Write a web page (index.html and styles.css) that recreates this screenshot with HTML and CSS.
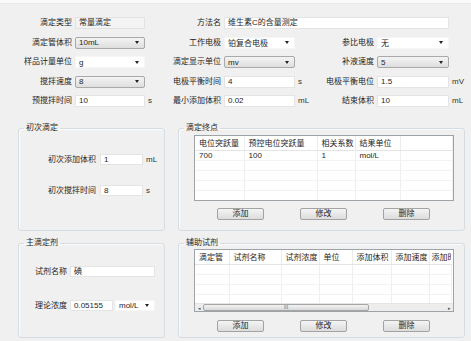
FILE: index.html
```html
<!DOCTYPE html>
<html lang="zh">
<head>
  <meta charset="UTF-8" />
  <meta name="viewport" content="width=device-width, initial-scale=1.0" />
  <title>滴定方法参数</title>
  <link rel="stylesheet" href="styles.css">
</head>
<body>
  <div class="topbar"></div>
  <div class="form">
    <div class="lbl">滴定类型</div>
    <div class="ro">常量滴定</div>
    <div></div>
    <div class="lbl">方法名</div>
    <div class="txt wide">维生素C的含量测定</div>
    <div></div>

    <div class="lbl">滴定管体积</div>
    <div class="combo btn">10mL</div>
    <div></div>
    <div class="lbl">工作电极</div>
    <div class="combo">铂复合电极</div>
    <div></div>
    <div class="lbl">参比电极</div>
    <div class="combo">无</div>
    <div></div>

    <div class="lbl">样品计量单位</div>
    <div class="combo">g</div>
    <div></div>
    <div class="lbl">滴定显示单位</div>
    <div class="combo btn">mv</div>
    <div></div>
    <div class="lbl">补液速度</div>
    <div class="combo btn">5</div>
    <div></div>

    <div class="lbl">搅拌速度</div>
    <div class="combo btn">8</div>
    <div></div>
    <div class="lbl">电极平衡时间</div>
    <div class="txt">4</div>
    <div class="unit">s</div>
    <div class="lbl">电极平衡电位</div>
    <div class="txt">1.5</div>
    <div class="unit">mV</div>

    <div class="lbl">预搅拌时间</div>
    <div class="txt">10</div>
    <div class="unit">s</div>
    <div class="lbl">最小添加体积</div>
    <div class="txt">0.02</div>
    <div class="unit">mL</div>
    <div class="lbl">结束体积</div>
    <div class="txt">10</div>
    <div class="unit">mL</div>
  </div>

  <div class="section top">
    <fieldset class="group left">
      <legend>初次滴定</legend>
      <div class="first-rows">
        <div class="lbl">初次添加体积</div>
        <div class="txt">1</div>
        <div class="unit">mL</div>
        <div class="lbl">初次搅拌时间</div>
        <div class="txt">8</div>
        <div class="unit">s</div>
      </div>
    </fieldset>
    <fieldset class="group right">
      <legend>滴定终点</legend>
      <div class="grid end-grid">
        <table>
          <colgroup>
            <col style="width:49px"><col style="width:73px"><col style="width:38px"><col style="width:45px"><col>
          </colgroup>
          <tr><th>电位突跃量</th><th>预控电位突跃量</th><th>相关系数</th><th>结果单位</th><th></th></tr>
          <tr><td>700</td><td>100</td><td>1</td><td>mol/L</td><td></td></tr>
          <tr><td></td><td></td><td></td><td></td><td></td></tr>
          <tr><td></td><td></td><td></td><td></td><td></td></tr>
          <tr><td></td><td></td><td></td><td></td><td></td></tr>
          <tr><td></td><td></td><td></td><td></td><td></td></tr>
        </table>
      </div>
      <div class="btns">
        <button>添加</button>
        <button>修改</button>
        <button>删除</button>
      </div>
    </fieldset>
  </div>

  <div class="section bottom">
    <fieldset class="group left">
      <legend>主滴定剂</legend>
      <div class="main-rows">
        <div class="lbl">试剂名称</div>
        <div class="txt name">碘</div>
        <div class="lbl">理论浓度</div>
        <div class="conc">
          <div class="txt">0.05155</div>
          <div class="combo">mol/L</div>
        </div>
      </div>
    </fieldset>
    <fieldset class="group right">
      <legend>辅助试剂</legend>
      <div class="grid aux-grid">
        <div class="aux-view">
          <table>
            <colgroup>
              <col style="width:34px"><col style="width:52px"><col style="width:38px"><col style="width:33px"><col style="width:39px"><col style="width:38px"><col style="width:22px">
            </colgroup>
            <tr><th>滴定管</th><th>试剂名称</th><th>试剂浓度</th><th>单位</th><th>添加体积</th><th>添加速度</th><th class="cut">添加时</th></tr>
            <tr><td></td><td></td><td></td><td></td><td></td><td></td><td></td></tr>
            <tr><td></td><td></td><td></td><td></td><td></td><td></td><td></td></tr>
            <tr><td></td><td></td><td></td><td></td><td></td><td></td><td></td></tr>
            <tr><td></td><td></td><td></td><td></td><td></td><td></td><td></td></tr>
          </table>
        </div>
        <div class="hscroll">
          <span class="sarrow">&#9666;</span>
          <div class="thumb">III</div>
          <span class="sarrow">&#9656;</span>
        </div>
      </div>
      <div class="btns">
        <button>添加</button>
        <button>修改</button>
        <button>删除</button>
      </div>
    </fieldset>
  </div>
</body>
</html>
```

FILE: styles.css
```css
* {
  box-sizing: border-box;
  margin: 0;
  padding: 0;
}
body {
  width: 471px;
  height: 341px;
  overflow: hidden;
  background-color: #f0f0f0;
  font-family: "Liberation Sans", "Noto Sans CJK SC", sans-serif;
  font-size: 8px;
  color: #1e1e1e;
}
.topbar {
  height: 4px;
  background-color: #fafafa;
  border-bottom: 1px solid #e8e8e8;
}
.form {
  display: grid;
  grid-template-columns: 75px 70px 12px 67px 71px 14px 68px 72px 1fr;
  grid-template-rows: repeat(5, 12px);
  row-gap: 7.5px;
  padding-top: 13px;
  height: 108px;
}
.lbl {
  text-align: right;
  padding-right: 3px;
  line-height: 12px;
  white-space: nowrap;
}
.unit {
  padding-left: 3px;
  line-height: 12px;
  color: #333;
}
.txt {
  background-color: #fff;
  border: 1px solid #e4e4e4;
  padding-left: 3px;
  line-height: 10px;
  height: 12px;
  white-space: nowrap;
}
.wide {
  grid-column: span 4;
}
.ro {
  background-color: #f3f3f3;
  border: 1px solid #e2e2e2;
  padding-left: 3px;
  line-height: 10px;
}
.combo {
  display: flex;
  align-items: center;
  justify-content: space-between;
  height: 12px;
  padding: 0 5px 0 3px;
  background-color: #fff;
  border: 1px solid #f6f6f6;
  white-space: nowrap;
}
.combo::after {
  content: "";
  border-left: 2.5px solid transparent;
  border-right: 2.5px solid transparent;
  border-top: 3px solid #222;
}
.combo.btn {
  background: linear-gradient(#f4f4f4, #dedede);
  border: 1px solid #a9a9a9;
  border-radius: 2px;
}
.section {
  display: flex;
  padding-left: 18px;
}
.section.top {
  margin-top: 11px;
  height: 108px;
}
.section.bottom {
  margin-top: 7px;
  height: 100px;
}
.group {
  border: 1px solid #d5dde3;
  border-radius: 3px;
  box-shadow: inset 1px 1px 0 #fbfbfb;
}
.group legend {
  margin-left: 5px;
  padding: 0 2px;
  line-height: 10px;
  color: #1e1e1e;
}
.group.left {
  width: 147px;
}
.group.right {
  width: 287px;
  margin-left: 13px;
}
.first-rows {
  display: grid;
  grid-template-columns: 81px 43px 1fr;
  grid-template-rows: 11px 11px;
  row-gap: 20px;
  margin-top: 21px;
}
.first-rows .lbl,
.first-rows .unit,
.main-rows .lbl {
  line-height: 11px;
}
.first-rows .lbl {
  padding-right: 4px;
}
.first-rows .txt,
.main-rows .txt {
  height: 11px;
  line-height: 9px;
}
.main-rows {
  display: grid;
  grid-template-columns: 51px 85px;
  grid-template-rows: 11px 11px;
  row-gap: 23px;
  margin-top: 18px;
}
.conc {
  display: flex;
  gap: 2px;
}
.conc .txt {
  width: 43px;
}
.conc .combo {
  flex: 1;
  height: 11px;
}
.grid {
  width: 260px;
  margin-left: 15px;
  background-color: #fff;
  border: 1px solid #9ea3a8;
  overflow: hidden;
}
.end-grid {
  margin-top: 2px;
  height: 66px;
}
.aux-grid {
  margin-top: 1px;
  height: 63px;
}
table {
  border-collapse: collapse;
  table-layout: fixed;
  width: 100%;
}
.aux-view table {
  width: 256px;
}
.aux-view {
  height: 53px;
  overflow: hidden;
}
th {
  height: 14px;
  font-weight: normal;
  text-align: left;
  padding-left: 4px;
  white-space: nowrap;
  overflow: hidden;
  border-right: 1px solid #ececec;
  border-bottom: 1px solid #e4e4e4;
}
th.cut {
  padding-left: 2px;
  border-right: none;
}
td {
  height: 10px;
  padding-left: 4px;
  line-height: 9px;
  white-space: nowrap;
  border-right: 1px solid #efefef;
  border-bottom: 1px solid #f3f3f3;
}
.hscroll {
  display: flex;
  align-items: center;
  height: 8px;
  background-color: #ededed;
  border-top: 1px solid #e4e4e4;
}
.sarrow {
  width: 8px;
  font-size: 5px;
  line-height: 8px;
  text-align: center;
  color: #555;
}
.sarrow:last-child {
  margin-left: auto;
}
.thumb {
  width: 166px;
  height: 7px;
  background: linear-gradient(#f3f3f3, #d9d9d9);
  border: 1px solid #a5a5a5;
  border-radius: 2px;
  text-align: center;
  font-size: 5px;
  line-height: 5px;
  color: #666;
}
.btns {
  display: flex;
  gap: 36px;
  padding-left: 38px;
  margin-top: 7px;
}
.bottom .btns {
  margin-top: 8px;
}
button {
  width: 47px;
  height: 12px;
  font-family: "Liberation Sans", "Noto Sans CJK SC", sans-serif;
  font-size: 8px;
  line-height: 10px;
  color: #1e1e1e;
  background: linear-gradient(#f4f4f4, #dcdcdc);
  border: 1px solid #a3a3a3;
  border-radius: 2px;
}
```
